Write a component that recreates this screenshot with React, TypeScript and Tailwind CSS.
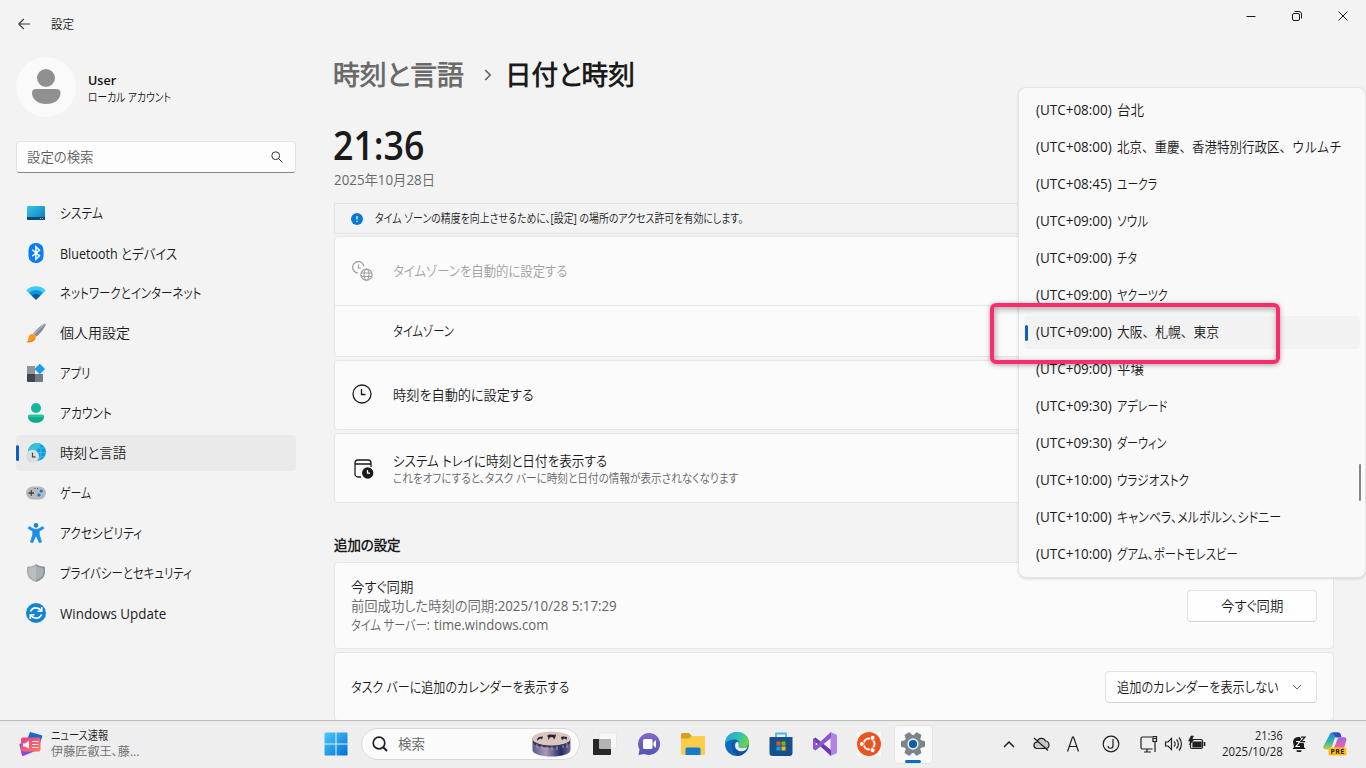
import { useLayoutEffect, useRef, useState, type ReactNode } from "react";
import { clsx } from "clsx";

function Fit({ className, children }: { className?: string; children: string }) {
  const box = useRef<HTMLDivElement>(null);
  const text = useRef<HTMLSpanElement>(null);
  const [scale, setScale] = useState(1);

  useLayoutEffect(() => {
    if (!box.current || !text.current) return;
    setScale(box.current.clientWidth / text.current.offsetWidth);
  }, [children]);

  return (
    <div ref={box} className={clsx("whitespace-nowrap shrink-0", className)}>
      <span ref={text} className="inline-block origin-left align-top" style={{ transform: `scaleX(${scale})` }}>
        {children}
      </span>
    </div>
  );
}

const navIcons: Record<string, ReactNode> = {
  system: (
    <>
      <defs>
        <linearGradient id="sys" x1="0" y1="0" x2="1" y2="1">
          <stop offset="0" stopColor="#32cbe4" />
          <stop offset="1" stopColor="#0f74c4" />
        </linearGradient>
      </defs>
      <rect x="1" y="3" width="18" height="14" rx="1" fill="url(#sys)" />
      <path d="M1 14h18v2a1 1 0 0 1-1 1H2a1 1 0 0 1-1-1z" fill="#0b4a73" />
      <path d="M14 15.5h1M16 15.5h1" stroke="#6cc5ea" />
    </>
  ),
  bluetooth: (
    <>
      <rect x="2.5" y="0" width="15" height="20" rx="7" fill="#0a7cf5" />
      <path d="M6.3 6.7l7.2 6.2-3.6 3.4V3.7l3.6 3.4-7.2 6.2" fill="none" stroke="#fff" strokeWidth="1.5" />
    </>
  ),
  network: (
    <>
      <path d="M.3 7.4a13.7 13.7 0 0 1 19.4 0L10 16.8z" fill="#3ccbf4" />
      <path d="M3 10a9.9 9.9 0 0 1 14 0l-7 6.8z" fill="#1595dc" />
      <path d="M5.7 12.6a6.1 6.1 0 0 1 8.6 0L10 16.8z" fill="#0b5aa8" />
    </>
  ),
  personal: (
    <>
      <path d="M18.6.6c1 .3 1.2 1 .8 1.8-2 3.800-5 7.600-9 11.200L7.200 10.400C10.500 6.500 14.500 3 18.600.600z" fill="#7f8890" />
      <path d="M18.600.600L7.200 10.400l1.500 1.500C12 8 16 4 19.400 1.400z" fill="#a9b0b7" />
      <path d="M7 11c2.200.3 3.300 1.800 2.800 3.800C9 18 4.500 20 .5 19c1.800-1 1.500-2.500 2-4.500C3 12 4.600 10.700 7 11z" fill="#f99a1f" />
      <path d="M.5 19c3.500.2 7-.8 9.300-4.200C9 18 4.500 20 .5 19z" fill="#e2571b" />
    </>
  ),
  apps: (
    <>
      <path d="M1 3h8v8H1z" fill="#8e959b" />
      <path d="M1 11h8v8H2a1 1 0 0 1-1-1z" fill="#41474d" />
      <path d="M9 11h8v7a1 1 0 0 1-1 1H9z" fill="#737a81" />
      <rect x="10" y="2.200" width="7.600" height="7.600" rx=".8" transform="rotate(45 13.800 6)" fill="#189fe8" />
    </>
  ),
  account: (
    <>
      <circle cx="10" cy="5" r="5" fill="#14b8a0" />
      <path d="M2 13.500c0-1 .8-1.700 1.700-1.700h12.600c.9 0 1.700.7 1.700 1.700 0 4-3.500 6.300-8 6.300s-8-2.300-8-6.300z" fill="#12a98a" />
      <path d="M2 13.500c0-1 .8-1.700 1.700-1.700h12.600c.9 0 1.700.7 1.700 1.700v.8H2z" fill="#25c6a6" />
    </>
  ),
  time: (
    <>
      <circle cx="11" cy="9" r="9" fill="#129ddd" />
      <path d="M2 9a9 9 0 0 1 13-8L10 9z" fill="#2cc4ce" />
      <path d="M4 5h14M2 9.500h18M7 14h12M11 0c5 5 5 13 1 18M11 0C7 4 6 10 7.500 14" stroke="#4fc4e8" strokeWidth=".7" fill="none" />
      <circle cx="6.500" cy="13.300" r="6.500" fill="#dadde0" />
      <path d="M6.500 9.800v4h3" stroke="#444" strokeWidth="1.200" fill="none" />
    </>
  ),
  game: (
    <>
      <rect x="0" y="3.500" width="20" height="13" rx="6.500" fill="#b4babf" />
      <path d="M2.500 10h5.500M5.300 7.300v5.400" stroke="#3d4349" strokeWidth="1.300" />
      <path d="M8.500 5.500h1M11 5.500h1" stroke="#4a5056" />
      <circle cx="15.200" cy="8" r="1.600" fill="#1976d2" />
      <circle cx="13" cy="12" r="1.600" fill="#1976d2" />
    </>
  ),
  access: (
    <>
      <circle cx="10" cy="2.400" r="2.300" fill="#1384d8" />
      <path d="M3.200 3.600L8 6.200h4l4.800-2.600 1 1.800-4.600 2.800v3.300l2.300 7.500-2.200.7L10.300 13h-.6l-3 6.700-2.200-.7 2.300-7.500V8.200L2.200 5.400z" fill="#1b8fe8" stroke="#1b8fe8" strokeWidth=".8" strokeLinejoin="round" />
    </>
  ),
  privacy: (
    <>
      <path d="M10 1c2.500 1.800 5.500 2.600 9 2.800V9c0 5-3.500 8.200-9 10z" fill="#8b9299" />
      <path d="M10 1C7.500 2.800 4.500 3.600 1 3.800V9c0 5 3.500 8.200 9 10z" fill="#aab0b6" />
      <path d="M10 2.800c2.200 1.300 4.500 2.100 7.300 2.400V9c0 4-2.800 6.500-7.300 8.200C5.500 15.500 2.700 13 2.700 9V5.200C5.500 4.900 7.800 4.100 10 2.800z" fill="#c8ccd0" opacity=".5" />
    </>
  ),
  update: (
    <>
      <circle cx="10" cy="10" r="10" fill="#1383d8" />
      <path d="M4.500 8.500C5.500 6 7.500 4.800 10 4.800c2 0 3.700.9 5 2.700M15.500 11.500c-1 2.500-3 3.700-5.500 3.700-2 0-3.700-.9-5-2.700" stroke="#fff" strokeWidth="1.700" fill="none" />
      <path d="M15.700 4v4.200h-4.200M4.300 16v-4.200h4.200" stroke="#fff" strokeWidth="1.600" fill="none" />
    </>
  ),
};

const navItems = [
  { id: "system", label: "システム", width: "w-[43px]" },
  { id: "bluetooth", label: "Bluetooth とデバイス", width: "w-[117px]" },
  { id: "network", label: "ネットワークとインターネット", width: "w-[141px]" },
  { id: "personal", label: "個人用設定", width: "w-[70px]" },
  { id: "apps", label: "アプリ", width: "w-[30px]" },
  { id: "account", label: "アカウント", width: "w-[52px]" },
  { id: "time", label: "時刻と言語", width: "w-[66px]" },
  { id: "game", label: "ゲーム", width: "w-[31px]" },
  { id: "access", label: "アクセシビリティ", width: "w-[82px]" },
  { id: "privacy", label: "プライバシーとセキュリティ", width: "w-[132px]" },
  { id: "update", label: "Windows Update", width: "w-[106px]" },
];

const zones = [
  { offset: "(UTC+08:00)", name: "台北", width: "w-[27px]" },
  {
    offset: "(UTC+08:00)",
    name: "北京、重慶、香港特別行政区、ウルムチ",
    width: "w-[225px] [font-feature-settings:normal]",
  },
  { offset: "(UTC+08:45)", name: "ユークラ", width: "w-[40px]" },
  { offset: "(UTC+09:00)", name: "ソウル", width: "w-[31px]" },
  { offset: "(UTC+09:00)", name: "チタ", width: "w-[20px]" },
  { offset: "(UTC+09:00)", name: "ヤクーツク", width: "w-[51px]" },
  {
    offset: "(UTC+09:00)",
    name: "大阪、札幌、東京",
    width: "w-[102px] [font-feature-settings:normal]",
    selected: true,
  },
  { offset: "(UTC+09:00)", name: "平壌", width: "w-[27px]" },
  { offset: "(UTC+09:30)", name: "アデレード", width: "w-[50px]" },
  { offset: "(UTC+09:30)", name: "ダーウィン", width: "w-[49px]" },
  { offset: "(UTC+10:00)", name: "ウラジオストク", width: "w-[72px]" },
  { offset: "(UTC+10:00)", name: "キャンベラ、メルボルン、シドニー", width: "w-[164px]" },
  { offset: "(UTC+10:00)", name: "グアム、ポートモレスビー", width: "w-[121px]" },
];

function TitleBar() {
  return (
    <header className="flex h-12 shrink-0 items-start justify-between">
      <div className="flex h-12 items-center pl-[18px]">
        <svg className="h-3 w-3" viewBox="0 0 12 12" fill="none" stroke="#3a3a3a" strokeWidth="1.1">
          <path d="M12 6H.8M5.800 1L.8 6l5 5" />
        </svg>
        <Fit className="ml-[21px] mt-0.5 w-[23px] text-xs text-[#1a1a1a]">設定</Fit>
      </div>
      <svg className="h-8 w-[138px]" viewBox="0 0 138 32" fill="none" stroke="#1a1a1a">
        <path d="M18.500 16.500h9" />
        <rect x="64.500" y="13.500" width="7" height="7" rx="1.500" />
        <path d="M66.500 11.500h4.500a2.500 2.500 0 0 1 2.500 2.500v4.500" />
        <path d="M110.500 11.500l9 9m0-9l-9 9" />
      </svg>
    </header>
  );
}

function Sidebar() {
  return (
    <aside className="w-[296px] shrink-0 pl-4 pt-[9px]">
      <div className="flex h-[60px] items-center">
        <svg className="h-[60px] w-[60px]" viewBox="0 0 60 60">
          <circle cx="30" cy="30" r="30" fill="#fafafa" />
          <circle cx="30" cy="21" r="9" fill="#909090" />
          <path d="M16 36a4 4 0 0 1 4-4h20.500a4 4 0 0 1 4 4c0 6.500-6 11-14.200 11S16 42.500 16 36z" fill="#909090" />
        </svg>
        <div className="ml-3 mt-0.5 text-[#111]">
          <Fit className="w-[28px] text-[13px] font-semibold leading-[18px]">User</Fit>
          <Fit className="w-[83px] text-xs leading-[17px]">ローカル アカウント</Fit>
        </div>
      </div>
      <div className="mt-6 flex h-8 w-[280px] items-center justify-between rounded border border-b-[#868686] border-[#e3e3e3] bg-[#fdfdfd] pl-2.5 pr-3">
        <Fit className="w-[67px] text-sm text-[#606060]">設定の検索</Fit>
        <svg className="h-3 w-3" viewBox="0 0 12 12" fill="none" stroke="#333">
          <circle cx="4.700" cy="4.700" r="3.900" />
          <path d="M7.500 7.500l4 4" />
        </svg>
      </div>
      <nav className="mt-[22px] flex flex-col gap-1">
        {navItems.map((item) => (
          <div
            key={item.id}
            className={clsx("flex h-9 items-center rounded", item.id === "time" && "bg-[#eaeaea]")}
          >
            <span className={clsx("h-4 w-[3px] rounded-full", item.id === "time" && "bg-[#0f5fbf]")} />
            <svg className="ml-[7px] h-5 w-5" viewBox="0 0 20 20">
              {navIcons[item.id]}
            </svg>
            <Fit
              className={clsx(
                "ml-3.5 text-sm text-[#1a1a1a]",
                /[a-z]/.test(item.label) ? "mt-px" : "-mt-px",
                item.width
              )}
            >
              {item.label}
            </Fit>
          </div>
        ))}
      </nav>
    </aside>
  );
}

function Content() {
  return (
    <main className="ml-[37px] w-[1001px] shrink-0 pt-[7px] text-sm text-[#1a1a1a]">
      <h1 className="flex h-10 items-center text-[27px] font-semibold">
        <Fit className="w-[131px] text-[#6a6a6a]">時刻と言語</Fit>
        <svg className="ml-5 h-3 w-2" viewBox="0 0 8 12" fill="none" stroke="#606060" strokeWidth="1.600">
          <path d="M1.200 1l5 5-5 5" />
        </svg>
        <Fit className="ml-[13px] w-[130px]">日付と時刻</Fit>
      </h1>
      <Fit className="mt-[25px] w-[91px] text-[40px] font-semibold leading-[50px]">21:36</Fit>
      <Fit className="ml-px w-[101px] leading-[20px] text-[#686868]">2025年10月28日</Fit>

      <div className="ml-px">
        <div className="mt-[13px] flex h-[31px] items-center border border-[#e3e3e3] bg-[#f3f3f3] pl-4">
          <svg className="h-3 w-3" viewBox="0 0 12 12">
            <circle cx="6" cy="6" r="6" fill="#0b78d4" />
            <path d="M6 3v3.600M6 7.800V9" stroke="#fff" strokeWidth="1.200" />
          </svg>
          <Fit className="ml-[12px] w-[368px] text-xs">
            タイム ゾーンの精度を向上させるために、[設定] の場所のアクセス許可を有効にします。
          </Fit>
        </div>

        <section className="mt-0.5 h-[121px] rounded border border-[#e5e5e5] bg-[#fbfbfb]">
          <div className="flex h-[69px] items-center border-b border-[#e5e5e5] pl-[17px] text-[#a0a0a0]">
            <svg className="h-5 w-[21px]" viewBox="0 0 21 20" fill="none" stroke="#9b9b9b">
              <path d="M6 12A5.700 5.700 0 1 1 12 5.500M6.500 3.500V7H9" strokeWidth="1.200" />
              <circle cx="14.500" cy="13.700" r="5.600" strokeWidth="1.200" />
              <path d="M9.500 12h10M9.500 15.500h10" />
              <ellipse cx="14.500" cy="13.700" rx="2.400" ry="5.600" />
            </svg>
            <Fit className="ml-5 w-[174px]">タイムゾーンを自動的に設定する</Fit>
          </div>
          <div className="flex h-[50px] items-center pl-[58px]">
            <Fit className="w-[61px]">タイムゾーン</Fit>
          </div>
        </section>

        <section className="mt-[3px] flex h-[70px] items-center rounded border border-[#e5e5e5] bg-[#fbfbfb] pl-[17px]">
          <svg className="-mt-0.5 h-5 w-5" viewBox="0 0 20 20" fill="none" stroke="#1a1a1a" strokeWidth="1.300">
            <circle cx="10" cy="10" r="9" />
            <path d="M9.500 5v5.500h4" />
          </svg>
          <Fit className="ml-[21px] w-[141px]">時刻を自動的に設定する</Fit>
        </section>

        <section className="mt-[3px] flex h-[70px] items-center rounded border border-[#e5e5e5] bg-[#fbfbfb] pl-[19px]">
          <svg className="mt-px h-5 w-5" viewBox="0 0 20 20" fill="none" stroke="#1a1a1a" strokeWidth="1.300">
            <path d="M7 18H4a3 3 0 0 1-3-3V4a3 3 0 0 1 3-3h10a3 3 0 0 1 3 3v4M1 5h16" />
            <circle cx="13.700" cy="14" r="5.700" fill="#1a1a1a" stroke="none" />
            <path d="M13.500 11v3.200H16" stroke="#fff" />
          </svg>
          <div className="ml-[19px] mt-[3px]">
            <Fit className="w-[214px] leading-[18px]">システム トレイに時刻と日付を表示する</Fit>
            <Fit className="w-[345px] text-xs leading-[18px] text-[#646464]">
              これをオフにすると、タスク バーに時刻と日付の情報が表示されなくなります
            </Fit>
          </div>
        </section>

        <Fit className="mt-[32px] w-[67px] leading-5 font-bold">追加の設定</Fit>

        <section className="mt-[7px] flex h-[87px] items-center justify-between rounded border border-[#e5e5e5] bg-[#fbfbfb] px-4">
          <div className="leading-[19px]">
            <Fit className="w-[62px]">今すぐ同期</Fit>
            <Fit className="w-[266px] text-[#646464]">前回成功した時刻の同期:2025/10/28 5:17:29</Fit>
            <div className="flex gap-1 text-[#646464]">
              <Fit className="w-[79px]">タイム サーバー:</Fit>
              <Fit className="w-[114px]">time.windows.com</Fit>
            </div>
          </div>
          <button className="flex h-8 w-[130px] items-center justify-center rounded border border-[#e2e2e2] border-b-[#d0d0d0] bg-[#fefefe]">
            <Fit className="w-[62px]">今すぐ同期</Fit>
          </button>
        </section>

        <section className="mt-[3px] flex h-[69px] items-center justify-between rounded border border-[#e5e5e5] bg-[#fbfbfb] px-4">
          <Fit className="w-[218px]">タスク バーに追加のカレンダーを表示する</Fit>
          <button className="flex h-8 w-[212px] items-center justify-between rounded border border-[#e2e2e2] border-b-[#d0d0d0] bg-[#fefefe] pl-[11px] pr-[15px]">
            <Fit className="w-[162px]">追加のカレンダーを表示しない</Fit>
            <svg className="h-2 w-2" viewBox="0 0 8 8" fill="none" stroke="#666">
              <path d="M0 2l4 4 4-4" />
            </svg>
          </button>
        </section>
      </div>
    </main>
  );
}

function ZoneMenu() {
  return (
    <div className="absolute left-[1018px] top-[87px] h-[491px] w-[348px] rounded-lg border border-[#e3e3e3] bg-[#f9f9f9] pl-[5px] pt-1 shadow-sm">
      {zones.map((zone) => (
        <div key={zone.name} className="flex h-[37px] items-center">
          <div className={clsx("flex h-[33px] w-[336px] items-center rounded", zone.selected && "bg-[#f2f2f2]")}>
            <span className={clsx("ml-px h-4 w-[3px] rounded-full", zone.selected && "bg-[#0f5fbf]")} />
            <div className="-mt-px ml-2 flex gap-[5px] text-sm text-[#1a1a1a]">
              <Fit className="w-[76px]">{zone.offset}</Fit>
              <Fit className={zone.width}>{zone.name}</Fit>
            </div>
          </div>
        </div>
      ))}
      <span className="absolute right-[4px] top-[376px] h-[37px] w-0.5 rounded-full bg-[#858585]" />
    </div>
  );
}

function TaskCell({ active, children }: { active?: boolean; children: ReactNode }) {
  return (
    <div className="flex h-[47px] w-11 shrink-0 items-center justify-center">
      <div
        className={clsx(
          "relative flex h-[39px] w-[39px] items-center justify-center rounded",
          active && "border border-[#e4e4e4] bg-[#f9f9f9]"
        )}
      >
        <svg className="h-6 w-6" viewBox="0 0 24 24">
          {children}
        </svg>
        {active && <span className="absolute bottom-0 h-[3px] w-4 rounded-full bg-[#0f6cbd]" />}
      </div>
    </div>
  );
}

const teeth = [0, 60, 120, 180, 240, 300];

function Taskbar() {
  return (
    <footer className="flex h-12 shrink-0 items-center border-t border-[#bcbcbc] bg-[#eeeeee] pb-px">
      <div className="flex w-[314px] items-center pl-[19px]">
        <svg className="h-6 w-6" viewBox="0 0 24 24">
          <defs>
            <linearGradient id="news" x1="0" y1="0" x2="1" y2="1">
              <stop offset="0" stopColor="#e83d92" />
              <stop offset="1" stopColor="#ff7a59" />
            </linearGradient>
          </defs>
          <path d="M11 0l11 3a1.500 1.500 0 0 1 1.200 1.800L20 14 8 8z" fill="#1668d2" />
          <path d="M.3 12l6-2 10 9-11.500 4.800a1.500 1.500 0 0 1-2-1z" fill="#8846e0" />
          <rect x="2" y="5.500" width="19.500" height="14" rx="2" fill="url(#news)" />
          <path d="M4 11.500h2l4-3v8l-4-2H4z" fill="#fff" />
          <path d="M13 9.500h6.500M13 12.500h6.500M13 15.500h6.500" stroke="#ffe3e3" />
        </svg>
        <div className="ml-2 text-xs leading-4">
          <Fit className="w-[57px] text-[#1a1a1a]">ニュース速報</Fit>
          <Fit className="w-[88px] text-[#6b6b6b]">伊藤匠叡王、藤...</Fit>
        </div>
      </div>

      <TaskCell>
        <defs>
          <linearGradient id="win" x1="0" y1="0" x2="1" y2="1">
            <stop offset="0" stopColor="#4ccaf5" />
            <stop offset="1" stopColor="#0070d6" />
          </linearGradient>
        </defs>
        <path d="M.5 1.500a1 1 0 0 1 1-1h10v11H.5zM12.500.5h10a1 1 0 0 1 1 1v10h-11zM.5 12.500h11v11h-10a1 1 0 0 1-1-1zM12.500 12.500h11v10a1 1 0 0 1-1 1h-10z" fill="url(#win)" />
      </TaskCell>

      <div className="ml-[3px] flex h-8 w-[219px] shrink-0 items-center rounded-full border border-[#d9d9d9] bg-[#fbfbfb] pl-2.5 pr-2">
        <svg className="h-4 w-4" viewBox="0 0 16 16" fill="none" stroke="#1f1f1f" strokeWidth="1.700">
          <circle cx="7" cy="7" r="5.800" />
          <path d="M11 11l4 4" strokeWidth="2" />
        </svg>
        <Fit className="ml-[10px] w-[27px] text-sm text-[#606060]">検索</Fit>
        <svg className="ml-auto h-[26px] w-[39px]" viewBox="0 0 39 26">
          <defs>
            <linearGradient id="drum" x1="0" y1="0" x2="1" y2="0">
              <stop offset="0" stopColor="#5b5c88" />
              <stop offset=".35" stopColor="#a99bb6" />
              <stop offset=".75" stopColor="#242b61" />
              <stop offset="1" stopColor="#7c6d90" />
            </linearGradient>
          </defs>
          <path d="M.5 7v12c0 4 8.500 6.500 19 6.500s19-2.500 19-6.500V7z" fill="url(#drum)" />
          <path d="M1 9c3 7 34 7 37 0v3c-3 6-34 6-37 0z" fill="#343461" />
          <ellipse cx="19.500" cy="7.500" rx="19" ry="7" fill="#dcc5ba" />
          <path d="M5 8l2-2 4-.5-1 3-1-1-2 .5-1.500 2zM15 5l2-1.500 6 .3 1-1-.5 3-1.500 3-1-2.500h-3l-1.500 3-.3-3.300zM29 6l2-.5 4 .5-.5 3-1.500-1.500-2 .5-1 1.500z" fill="#1f1d4d" />
          <path d="M5 13v4M10 14.500v4M15 15.500v3M20 15.500v4M25 15v4M31 14v3M35 12v5" stroke="#b7afc9" strokeWidth=".8" />
        </svg>
      </div>

      <div className="ml-[3px] flex">
        <TaskCell>
          <rect x="6.500" y="1" width="17" height="15" rx="1" fill="#f8f8f8" stroke="#ddd" strokeWidth=".5" />
          <path d="M0 7h18v15a1 1 0 0 1-1 1H1a1 1 0 0 1-1-1z" fill="#272727" />
          <path d="M6 7h12v10H7a1 1 0 0 1-1-1z" fill="#b4b4b4" />
        </TaskCell>
        <TaskCell>
          <defs>
            <linearGradient id="chat" x1="0" y1="0" x2="0" y2="1">
              <stop offset="0" stopColor="#8368c8" />
              <stop offset="1" stopColor="#5155b5" />
            </linearGradient>
          </defs>
          <path d="M12 1a11 11 0 1 1-4.500 21L1.500 23l1-5.500A11 11 0 0 1 12 1z" fill="url(#chat)" />
          <rect x="6" y="7" width="9.500" height="10" rx="1.500" fill="#fff" />
          <path d="M16.500 10.500L19 8v8l-2.500-2.500z" fill="#fff" />
        </TaskCell>
        <TaskCell>
          <path d="M0 2.500A1.500 1.500 0 0 1 1.500 1H8l3 3h11.500A1.500 1.500 0 0 1 24 5.500V12H0z" fill="#dc9d17" />
          <path d="M0 6.500h8L11 4h13v17.500a1.500 1.500 0 0 1-1.500 1.500h-21A1.500 1.500 0 0 1 0 21.500z" fill="#fccd48" />
          <path d="M4.500 17a1.500 1.500 0 0 1 1.500-1.500h12a1.500 1.500 0 0 1 1.500 1.500v6h-15z" fill="#1679cc" />
        </TaskCell>
        <TaskCell>
          <defs>
            <linearGradient id="edge" x1="0" y1="0" x2="1" y2=".4">
              <stop offset="0" stopColor="#219de0" />
              <stop offset=".6" stopColor="#2fc5b0" />
              <stop offset="1" stopColor="#66d34b" />
            </linearGradient>
          </defs>
          <circle cx="12" cy="12" r="12" fill="#0f69bd" />
          <path d="M0 12C0 5 5.500 0 12 0s12 4.500 12 10c0 4-3 6-6.500 6-3 0-4.500-1-4-2 1.500-2 1-6-3-6.500C5.500 7 1.500 9 0 12z" fill="url(#edge)" />
          <path d="M7 12c0-3 2.500-4.500 4-4.300-1.500.8-2.500 2.800-2.500 5.300 0 4.500 4.500 7.500 9.500 6.500l3.700-1.500A12 12 0 0 1 13 24c-4-1-6-6-6-12z" fill="#174f9c" />
          <path d="M10.200 15c-.6-3 .8-5 2.600-5.200 1.200 1.200 1.300 2.900.7 4.200-.4 1.200 1.300 2.200 4 2.200 2 0 4-.6 5-1.700-.5 1.500-1.200 2.800-2 3.500-4 2.500-9.300 1-10.300-3z" fill="#eeeeee" />
        </TaskCell>
        <TaskCell>
          <path d="M7 6V1.500h10V6" fill="none" stroke="#4bb8ee" strokeWidth="1.800" />
          <path d="M.5 5h23v16a3 3 0 0 1-3 3h-17a3 3 0 0 1-3-3z" fill="#17508d" />
          <path d="M7.500 9.500h4v4h-4z" fill="#f25022" />
          <path d="M12.500 9.500h4v4h-4z" fill="#7fba00" />
          <path d="M7.500 14.500h4v4h-4z" fill="#00a4ef" />
          <path d="M12.500 14.500h4v4h-4z" fill="#ffb900" />
        </TaskCell>
        <TaskCell>
          <path d="M17.500 0L24 3v18l-6.500 3z" fill="#b184e4" />
          <path d="M0 7l2.500-1.500L18 18v6L2.500 10v6L0 17z" fill="#6b3aa6" />
          <path d="M0 17l2.500 1.500L18 6V0L2.500 14V8L0 7z" fill="#8e56cc" />
        </TaskCell>
        <TaskCell>
          <path d="M0 0h24v24H0z" fill="#fafafa" />
          <circle cx="12" cy="12" r="12" fill="#e95420" />
          <circle cx="12" cy="12" r="5.500" fill="none" stroke="#fff" strokeWidth="2" />
          <g fill="#fff" stroke="#e95420">
            <circle cx="4.800" cy="12" r="2.500" />
            <circle cx="15.600" cy="5.800" r="2.500" />
            <circle cx="15.600" cy="18.200" r="2.500" />
          </g>
        </TaskCell>
        <TaskCell active>
          {teeth.map((angle) => (
            <path key={angle} d="M9.500.5h5l1 5h-7z" transform={`rotate(${angle + 30} 12 12)`} fill="#7b848b" stroke="#7b848b" strokeLinejoin="round" />
          ))}
          <circle cx="12" cy="12" r="9" fill="#7b848b" />
          <circle cx="12" cy="12" r="5.700" fill="#e5e9ec" />
          <circle cx="12" cy="12" r="4" fill="#0b5cad" />
        </TaskCell>
      </div>

      <div className="ml-[58px] flex items-center">
        <svg className="h-12 w-[216px]" viewBox="993 720 216 48" fill="none" stroke="#1f1f1f" strokeWidth="1.200">
          <path d="M1004 747l5-5 5 5" strokeWidth="1.500" />
          <path d="M1036.500 748.500a3.300 3.300 0 0 1 .5-6.500 4.500 4.500 0 0 1 8.500-1c2.500.3 3.500 2 3.500 4s-1.500 3.500-3.500 3.500z" fill="#c8c8c8" />
          <path d="M1034 738l14 12.500" />
          <path d="M1067.500 751.500l5-14.500h1l5 14.500M1069.500 746.500h7" />
          <circle cx="1111" cy="744" r="7.800" />
          <path d="M1113 739v6.500a2.500 2.500 0 0 1-5 .5" />
          <path d="M1152 737h-9.500a1.500 1.500 0 0 0-1.500 1.500v9a1.500 1.500 0 0 0 1.500 1.500h10M1147 749v3M1144 752h7M1153 736.500h3.500v5H1153zM1155 741.500V752M1153 738.500h3.500" />
          <path d="M1165.500 742h2.500l3.500-3.500v11l-3.500-3.500h-2.500zM1174 741.500c1.500 1.500 1.500 3.500 0 5M1176.500 739.500c2.500 2.500 2.500 6.500 0 9M1179 737.500c3.200 3.500 3.200 9.500 0 13" />
          <rect x="1190.500" y="739.500" width="12" height="9" rx="1.500" />
          <path d="M1193 742h8v5h-8z" fill="#1f1f1f" />
          <path d="M1204.500 742v4" strokeWidth="1.600" />
          <path d="M1191 736l-2.500 5h2l-1 4 4.500-5.500h-2l1.500-3.500z" fill="#1f1f1f" strokeWidth=".5" />
        </svg>
        <div className="flex w-[74px] flex-col items-end text-xs leading-4 text-[#1f1f1f]">
          <Fit className="w-[28px]">21:36</Fit>
          <Fit className="w-[61px]">2025/10/28</Fit>
        </div>
        <svg className="ml-2 h-4 w-4" viewBox="0 0 16 16">
          <path d="M2 6a5.500 5.500 0 0 1 5-5h2l4 7v3l1.500 2h-13L3 11z" fill="#1a1a1a" />
          <path d="M5.500 14.300h5a2.500 2.500 0 0 1-5 0z" fill="#1a1a1a" />
          <path d="M5 5.500h4l-4 5h4" fill="none" stroke="#fff" strokeWidth="1.100" />
          <path d="M10 1.200h4l-4 4.500h4" fill="none" stroke="#eee" strokeWidth="2.600" />
          <path d="M10 1.200h4l-4 4.500h4" fill="none" stroke="#1a1a1a" strokeWidth="1.200" />
        </svg>
        <svg className="ml-4 h-6 w-6" viewBox="0 0 24 24">
          <defs>
            <linearGradient id="copA" x1="0" y1="0" x2="0" y2="1">
              <stop offset="0" stopColor="#1687e5" />
              <stop offset=".55" stopColor="#32b9a8" />
              <stop offset="1" stopColor="#c4cf3c" />
            </linearGradient>
            <linearGradient id="copB" x1="0" y1="0" x2="0" y2="1">
              <stop offset="0" stopColor="#9d62ef" />
              <stop offset="1" stopColor="#f5669a" />
            </linearGradient>
          </defs>
          <path d="M6.500 3c.7-2 1.500-2.500 3-2.500h5.500c1.800 0 2.500 1 3 3L12 5.500l-3 9c-.8 2-2 3-4 3H3C.5 17.500 0 16 .5 14z" fill="url(#copA)" />
          <path d="M9.500.5H15c1.800 0 2.500 1 3 3l.5 2H13z" fill="#3648bd" />
          <path d="M14 8c.7-2 1.700-2.800 3.500-2.800h3.500c2 0 2.800 1.300 2.300 3L21 16.500H11z" fill="url(#copB)" />
          <rect x="5.500" y="15.500" width="18" height="8" rx="1.500" fill="#fdbf12" />
          <text x="14.500" y="22" textAnchor="middle" fontSize="7" fontWeight="700" fill="#2b2100" letterSpacing=".3">
            PRE
          </text>
        </svg>
      </div>
    </footer>
  );
}

export default function App() {
  return (
    <div
      lang="ja"
      className="relative flex h-[768px] w-[1366px] flex-col overflow-hidden bg-[#f3f3f3] font-['Open_Sans','Noto_Sans_CJK_JP_DemiLight','Noto_Sans_CJK_JP_Light','Noto_Sans_CJK_JP',sans-serif] [font-feature-settings:'palt']"
    >
      <TitleBar />
      <div className="flex min-h-0 flex-1 overflow-hidden">
        <Sidebar />
        <Content />
      </div>
      <Taskbar />
      <ZoneMenu />
      {/* callout around the selected time zone */}
      <div className="absolute left-[990px] top-[303px] h-[61px] w-[290px] rounded-md border-4 border-[#fb2c6b] shadow-[0_1px_5px_rgba(0,0,0,0.35),inset_1px_2px_6px_rgba(0,0,0,0.35)]" />
    </div>
  );
}
